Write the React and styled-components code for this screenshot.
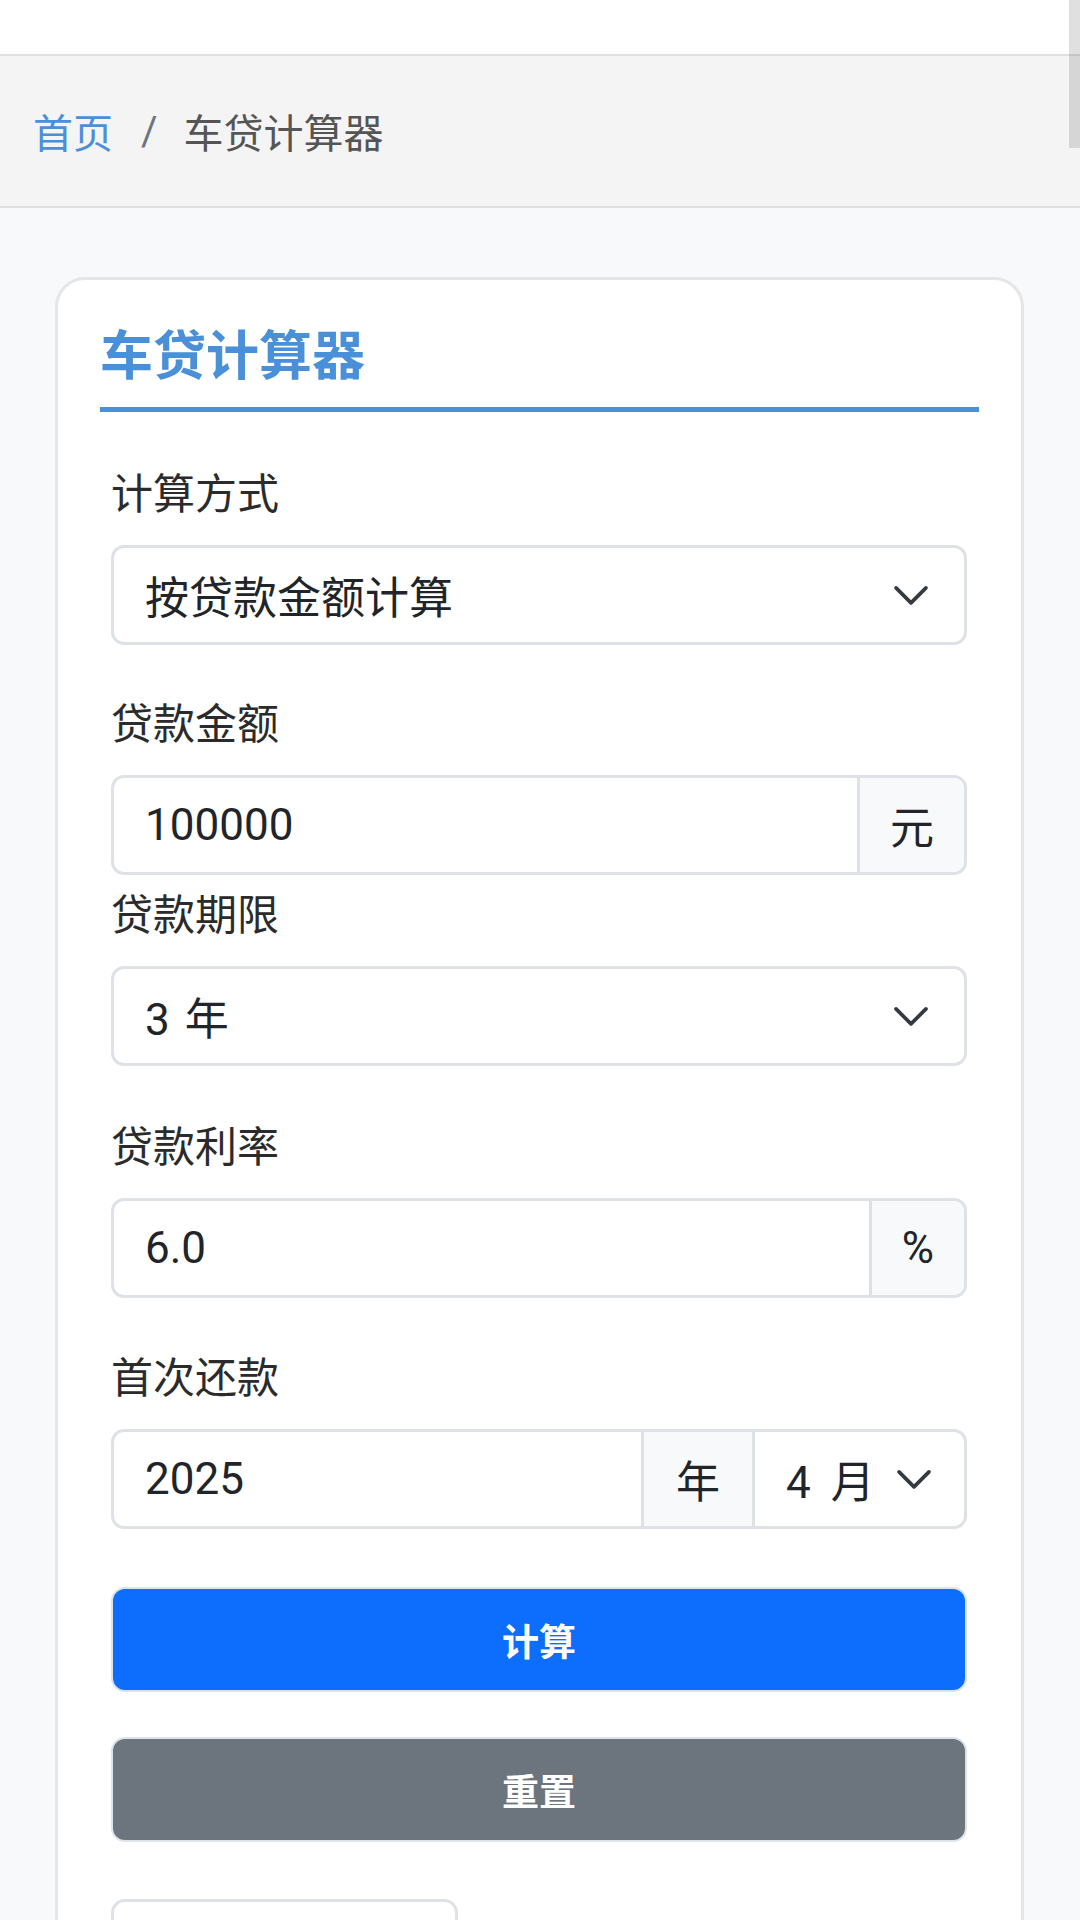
import styled, { createGlobalStyle } from "styled-components";

const GlobalStyle = createGlobalStyle`
  html, body {
    margin: 0;
    padding: 0;
    background: #f8f9fa;
  }
  body {
    font-family: Roboto, "Noto Sans CJK SC", sans-serif;
    color: #212529;
  }
  * {
    box-sizing: border-box;
  }
`;

function Chevron() {
  return (
    <ChevronSvg viewBox="0 0 16 16" aria-hidden="true">
      <path d="M2.3 5.3l5.7 5.7 5.7-5.7" fill="none" stroke="#343a40" strokeWidth="1.4" strokeLinecap="round" strokeLinejoin="round" />
    </ChevronSvg>
  );
}

function App() {
  return (
    <Page>
      <GlobalStyle />
      <TopBar />
      <Breadcrumb>
        <CrumbLink>首页</CrumbLink>
        <Sep>/</Sep>
        <CrumbActive>车贷计算器</CrumbActive>
      </Breadcrumb>
      <Main>
        <Card>
          <Title>车贷计算器</Title>
          <Form>
            <Field $mb={48}>
              <Label>计算方式</Label>
              <Select>
                <span>按贷款金额计算</span>
                <Chevron />
              </Select>
            </Field>

            <Field $mb={9}>
              <Label>贷款金额</Label>
              <Group>
                <Input defaultValue="100000" />
                <Addon>元</Addon>
              </Group>
            </Field>

            <Field $mb={50}>
              <Label>贷款期限</Label>
              <Select>
                <span>3 年</span>
                <Chevron />
              </Select>
            </Field>

            <Field $mb={49}>
              <Label>贷款利率</Label>
              <Group>
                <Input defaultValue="6.0" />
                <Addon>%</Addon>
              </Group>
            </Field>

            <Field $mb={58}>
              <Label>首次还款</Label>
              <Group>
                <Input defaultValue="2025" />
                <Addon $wide>年</Addon>
                <MonthSelect>
                  <span>4 月</span>
                  <Chevron />
                </MonthSelect>
              </Group>
            </Field>

            <Button $bg="#0d6efd">计算</Button>
            <Button $bg="#6c757d">重置</Button>
            <ResultTab />
          </Form>
        </Card>
      </Main>
      <ScrollThumb />
    </Page>
  );
}
export default App;

const Page = styled.div`
  position: relative;
  height: 1920px;
  overflow: hidden;
  background: #f8f9fa;
`;

const TopBar = styled.div`
  height: 56px;
  background: #fff;
  border-bottom: 2px solid #e0e0e0;
`;

const Breadcrumb = styled.nav`
  height: 152px;
  display: flex;
  align-items: center;
  padding: 0 33px;
  background: #f4f4f4;
  border-bottom: 2px solid #e0e0e0;
  font-size: 40px;
`;

const CrumbLink = styled.a`
  color: #4a90d9;
  text-decoration: none;
`;

const Sep = styled.span`
  color: #6c757d;
  margin: 0 26px 0 28px;
`;

const CrumbActive = styled.span`
  color: #555;
`;

const Main = styled.main`
  padding: 69px 56px 0 55px;
`;

const Card = styled.section`
  background: #fff;
  border: 3px solid #e4e6e8;
  border-radius: 30px;
  padding: 46px 42px 0;
  min-height: 1800px;
`;

const Title = styled.h2`
  margin: 0;
  font-size: 53px;
  font-weight: 700;
  line-height: 62px;
  color: #4a90d9;
  padding-bottom: 19px;
  border-bottom: 5px solid #4a90d9;
`;

const Form = styled.div`
  padding: 0 12px 0 11px;
  margin-top: 51px;
  display: flex;
  flex-direction: column;
`;

const Field = styled.div`
  margin-bottom: ${(p) => p.$mb}px;
`;

const Label = styled.label`
  display: block;
  font-size: 42px;
  line-height: 63px;
  color: #2b2b2b;
  margin-bottom: 19px;
`;

const Select = styled.div`
  height: 100px;
  display: flex;
  align-items: center;
  justify-content: space-between;
  padding: 0 32px 0 31px;
  border: 3px solid #dee2e6;
  border-radius: 13px;
  background: #fff;
  font-size: 44px;
  word-spacing: 4px;
  color: #212529;
`;

const ChevronSvg = styled.svg`
  width: 42px;
  height: 42px;
  flex: none;
`;

const Group = styled.div`
  height: 100px;
  display: flex;
  border: 3px solid #dee2e6;
  border-radius: 13px;
  overflow: hidden;
  background: #fff;
`;

const Input = styled.input`
  flex: 1;
  min-width: 0;
  border: 0;
  outline: none;
  padding: 0 31px;
  font-family: Roboto, "Noto Sans CJK SC", sans-serif;
  font-size: 44px;
  color: #212529;
  background: transparent;
`;

const Addon = styled.span`
  display: flex;
  align-items: center;
  justify-content: center;
  padding: 0 ${(p) => (p.$wide ? 32 : 30)}px;
  border-left: 3px solid #dee2e6;
  background: #f8f9fa;
  font-size: 44px;
  color: #212529;
`;

const MonthSelect = styled.div`
  width: 212px;
  flex: none;
  display: flex;
  align-items: center;
  justify-content: space-between;
  padding: 0 29px 0 31px;
  border-left: 3px solid #dee2e6;
  font-size: 44px;
  word-spacing: 9px;
  color: #212529;
`;

const Button = styled.button`
  height: 105px;
  width: 100%;
  margin-bottom: 45px;
  border: 2px solid #dde3ea;
  border-radius: 14px;
  background: ${(p) => p.$bg};
  color: #fff;
  font-family: Roboto, "Noto Sans CJK SC", sans-serif;
  font-size: 37px;
  font-weight: 700;
`;

const ResultTab = styled.div`
  width: 347px;
  height: 100px;
  margin-top: 12px;
  border: 3px solid #dee2e6;
  border-radius: 14px;
  background: #fff;
`;

const ScrollThumb = styled.div`
  position: absolute;
  top: 0;
  right: 0;
  width: 11px;
  height: 148px;
  background: rgba(0, 0, 0, 0.12);
`;
